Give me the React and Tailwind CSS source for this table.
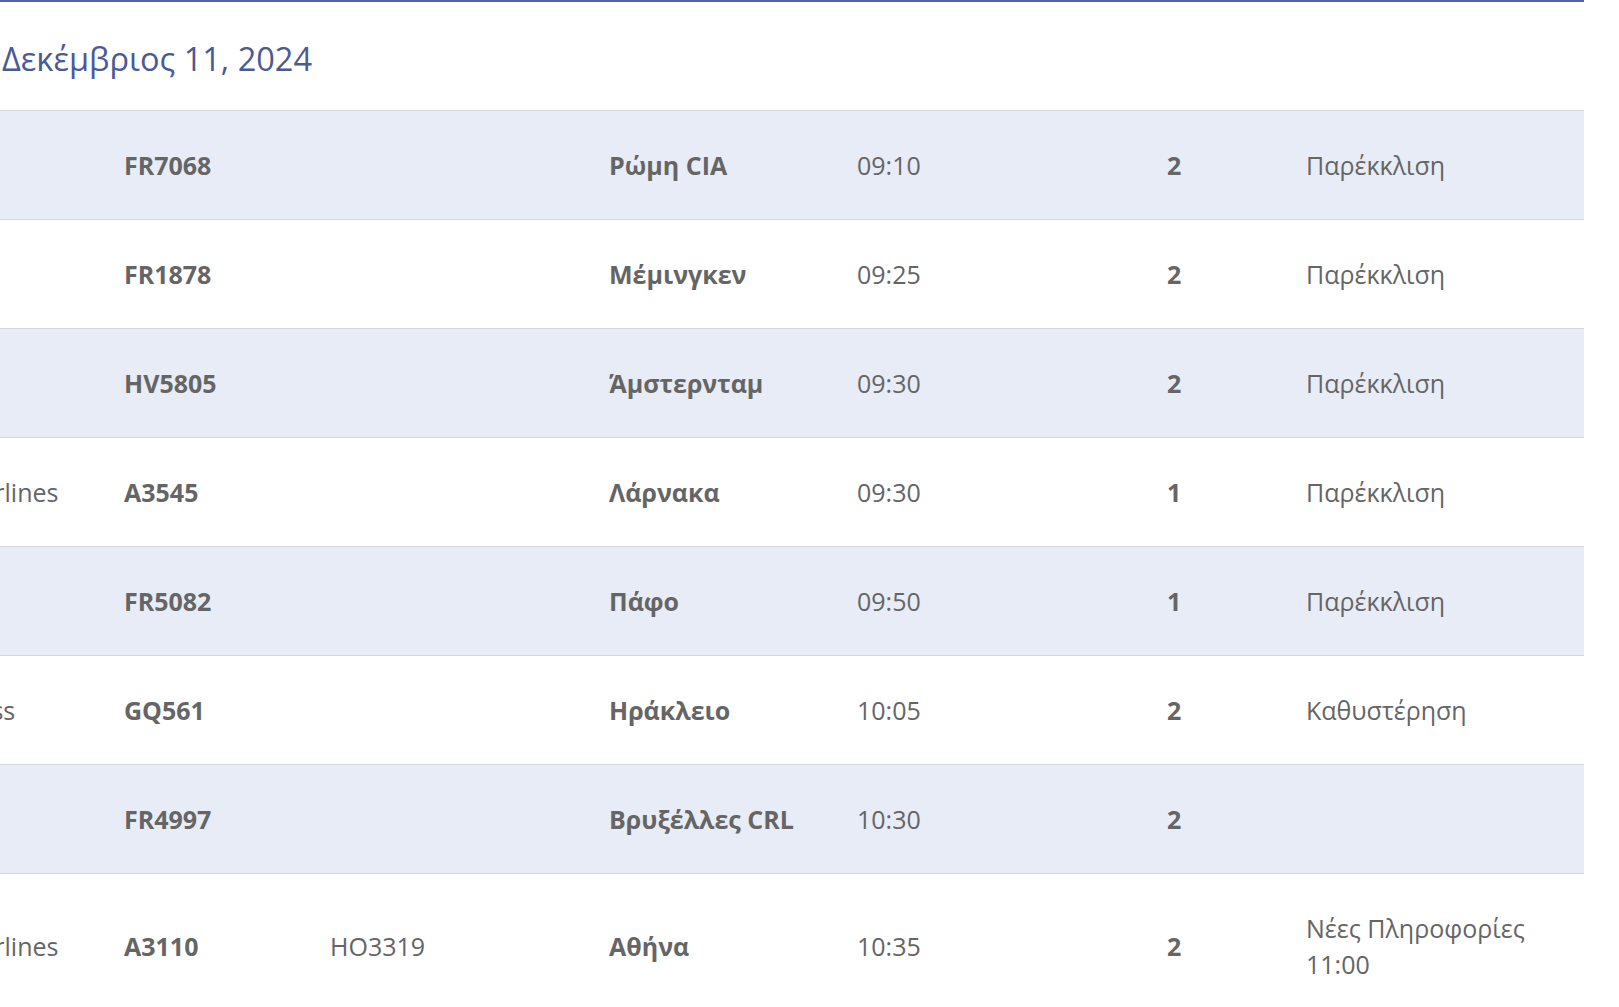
import React from 'react';

const flights = [
  { airline: 'Ryanair', flight: 'FR7068', codeshare: '', dest: 'Ρώμη CIA', time: '09:10', terminal: '2', status: 'Παρέκκλιση' },
  { airline: 'Ryanair', flight: 'FR1878', codeshare: '', dest: 'Μέμινγκεν', time: '09:25', terminal: '2', status: 'Παρέκκλιση' },
  { airline: 'Transavia', flight: 'HV5805', codeshare: '', dest: 'Άμστερνταμ', time: '09:30', terminal: '2', status: 'Παρέκκλιση' },
  { airline: 'Aegean Airlines', flight: 'A3545', codeshare: '', dest: 'Λάρνακα', time: '09:30', terminal: '1', status: 'Παρέκκλιση' },
  { airline: 'Ryanair', flight: 'FR5082', codeshare: '', dest: 'Πάφο', time: '09:50', terminal: '1', status: 'Παρέκκλιση' },
  { airline: 'Sky Express', flight: 'GQ561', codeshare: '', dest: 'Ηράκλειο', time: '10:05', terminal: '2', status: 'Καθυστέρηση' },
  { airline: 'Ryanair', flight: 'FR4997', codeshare: '', dest: 'Βρυξέλλες CRL', time: '10:30', terminal: '2', status: '' },
  { airline: 'Aegean Airlines', flight: 'A3110', codeshare: 'HO3319', dest: 'Αθήνα', time: '10:35', terminal: '2', status: 'Νέες Πληροφορίες 11:00' },
];

function FlightRow({ f, striped }) {
  return (
    <div
      className={`-ml-[121px] w-[1705px] grid grid-cols-[245px_206px_279px_248px_310px_139px_1fr] items-center border-t border-[#d6d7de] py-[36px] text-[25px] leading-[36px] text-[#656565] ${
        striped ? 'bg-[#e8ecf6]' : 'bg-white'
      }`}
    >
      <div className="whitespace-nowrap">{f.airline}</div>
      <div className="font-bold">{f.flight}</div>
      <div>{f.codeshare}</div>
      <div className="font-bold">{f.dest}</div>
      <div>{f.time}</div>
      <div className="font-bold">{f.terminal}</div>
      <div className="pr-[20px]">{f.status}</div>
    </div>
  );
}

export default function App() {
  return (
    <div className="h-[1007px] w-full overflow-hidden bg-white font-['Open_Sans',sans-serif]">
      <div className="w-[1584px]">
        {/* Date header */}
        <div className="border-t-2 border-[#5564a2] h-[110px] pt-[33px] pl-[2px]">
          <h2 className="text-[32.5px] leading-[48px] text-[#4b5995]">Δεκέμβριος 11, 2024</h2>
        </div>

        {/* Flights */}
        <div>
          {flights.map((f, i) => (
            <FlightRow key={f.flight} f={f} striped={i % 2 === 0} />
          ))}
        </div>
      </div>
    </div>
  );
}
